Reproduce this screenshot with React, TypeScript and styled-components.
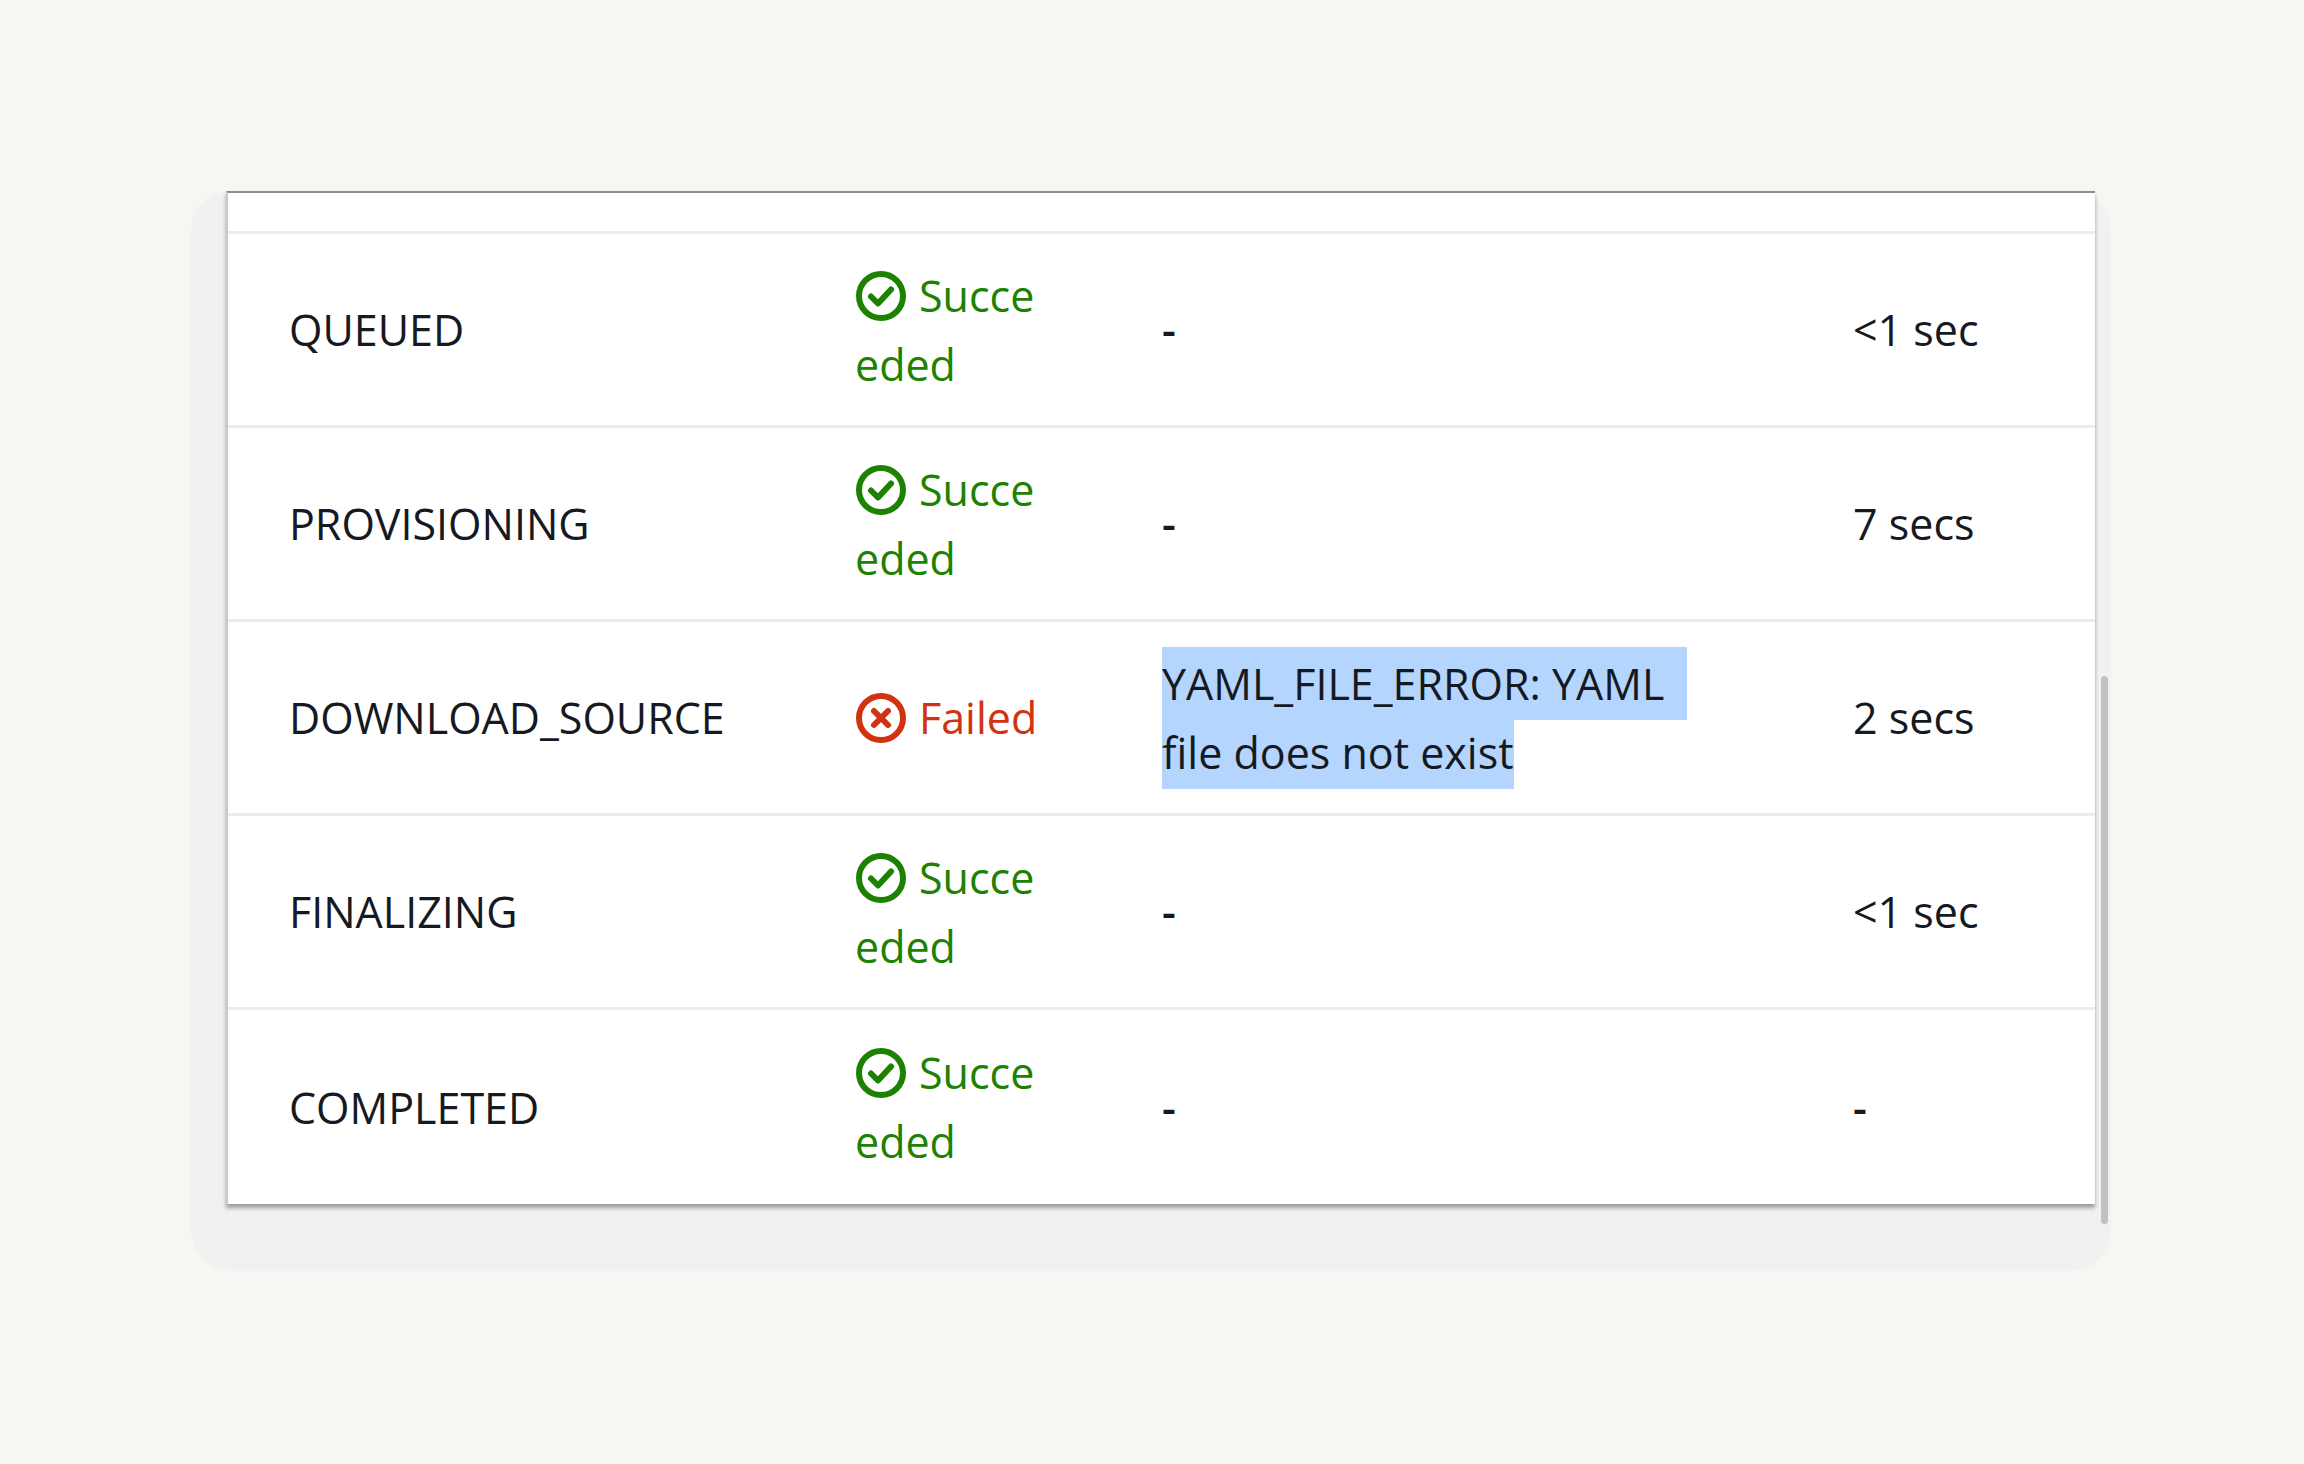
import React from "react";
import styled, { createGlobalStyle } from "styled-components";

const Global = createGlobalStyle`
  html, body { margin: 0; padding: 0; background: #f8f6f2; }
  body { font-family: "Open Sans", "Noto Sans", sans-serif; }
`;

const Page = styled.div`
  width: 2304px;
  height: 1464px;
  padding: 191px 0 0 191px;
  box-sizing: border-box;
`;

const Card = styled.div`
  position: relative;
  width: 1920px;
  height: 1080px;
  background: #f1f1f1;
  border-radius: 40px;
  box-sizing: border-box;
  padding-left: 35px;
`;

const Panel = styled.div`
  width: 1867px;
  background: #fff;
  border-top: 2px solid #8d9090;
  border-left: 2px solid #c8cbcb;
  box-shadow: 0 4px 4px rgba(0, 0, 0, 0.35);
`;

const TopRow = styled.div`
  height: 38px;
  border-bottom: 3px solid #eaeded;
`;

const Row = styled.div<{ $last?: boolean }>`
  display: grid;
  grid-template-columns: 566px 307px 691px 1fr;
  align-items: center;
  height: 194px;
  padding-left: 61px;
  box-sizing: border-box;
  border-bottom: ${(p) => (p.$last ? "none" : "3px solid #eaeded")};
  font-size: 43px;
  line-height: 69px;
  color: #16191f;
`;

const Cell = styled.div``;

const Dash = styled.span`
  font-weight: 600;
`;

const StatusCell = styled.div<{ $ok: boolean }>`
  width: 190px;
  word-break: break-all;
  color: ${(p) => (p.$ok ? "#1d8102" : "#d13212")};
`;

const Icon = styled.svg`
  width: 52px;
  height: 52px;
  vertical-align: -10px;
  margin-right: 12px;
`;

const Details = styled.div`
  width: 540px;
`;

const Highlight = styled.span`
  background: #b4d5fe;
  padding: 7px 0;
  white-space: pre-wrap;
  box-decoration-break: clone;
  -webkit-box-decoration-break: clone;
`;

const Scrollbar = styled.div`
  position: absolute;
  left: 1910px;
  top: 485px;
  width: 7px;
  height: 548px;
  border-radius: 4px;
  background: #c1c1c1;
`;

const Ok = () => (
  <Icon viewBox="0 0 52 52">
    <circle cx="26" cy="26" r="22" fill="none" stroke="#1d8102" strokeWidth="6" />
    <path d="M16 26.5l7 7 13-14" fill="none" stroke="#1d8102" strokeWidth="6" strokeLinecap="round" strokeLinejoin="round" />
  </Icon>
);

const Fail = () => (
  <Icon viewBox="0 0 52 52">
    <circle cx="26" cy="26" r="22" fill="none" stroke="#d13212" strokeWidth="6" />
    <path d="M19 19l14 14M33 19L19 33" fill="none" stroke="#d13212" strokeWidth="6" strokeLinecap="round" />
  </Icon>
);

const rows = [
  { name: "QUEUED", ok: true, det: "-", dur: "<1 sec" },
  { name: "PROVISIONING", ok: true, det: "-", dur: "7 secs" },
  { name: "DOWNLOAD_SOURCE", ok: false, det: "YAML_FILE_ERROR: YAML  file does not exist", dur: "2 secs" },
  { name: "FINALIZING", ok: true, det: "-", dur: "<1 sec" },
  { name: "COMPLETED", ok: true, det: "-", dur: "-" },
];

export default function App() {
  return (
    <Page>
      <Global />
      <Card>
        <Panel>
          <TopRow />
          {rows.map((r, i) => (
            <Row key={r.name} $last={i === rows.length - 1}>
              <Cell>{r.name}</Cell>
              <StatusCell $ok={r.ok}>
                {r.ok ? <Ok /> : <Fail />}
                {r.ok ? "Succeeded" : "Failed"}
              </StatusCell>
              <Details>{r.ok ? <Dash>{r.det}</Dash> : <Highlight>{r.det}</Highlight>}</Details>
              <Cell>{r.dur === "-" ? <Dash>-</Dash> : r.dur}</Cell>
            </Row>
          ))}
        </Panel>
        <Scrollbar />
      </Card>
    </Page>
  );
}
